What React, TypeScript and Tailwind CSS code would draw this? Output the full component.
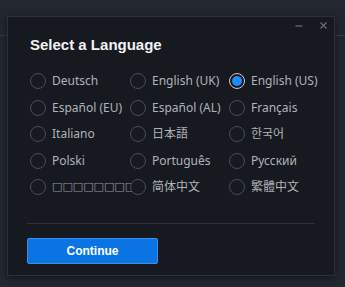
import React, { useState } from "react"

const languages = [
  "Deutsch",
  "English (UK)",
  "English (US)",
  "Español (EU)",
  "Español (AL)",
  "Français",
  "Italiano",
  "日本語",
  "한국어",
  "Polski",
  "Português",
  "Русский",
  "□□□□□□□□",
  "简体中文",
  "繁體中文",
]

const Radio = ({ checked }: { checked: boolean }) =>
  checked ? (
    <span className="relative z-10 flex h-4 w-4 shrink-0 items-center justify-center rounded-full border border-[#c9ccd2] bg-[#16191f]">
      <span className="h-[10px] w-[10px] rounded-full bg-[#1e8cff]" />
    </span>
  ) : (
    <span className="relative z-10 h-4 w-4 shrink-0 rounded-full border border-[#4a4d54] bg-[#161920]" />
  )

const App = () => {
  const [selected, setSelected] = useState("English (US)")
  return (
    <div className="relative h-[287px] w-[345px] overflow-hidden bg-[#23272f] font-['Noto_Sans','Noto_Sans_CJK_JP',sans-serif]">
      <div className="h-[36px] border-b border-[#3a3e46]" />
      <div className="absolute left-[7px] top-[16px] flex h-[260px] w-[328px] flex-col border border-[#2c3038] bg-[#161920] px-[19px] pt-[18px] shadow-[0_2px_8px_rgba(0,0,0,0.5)]">
        <div className="absolute right-[7px] top-[5px] flex gap-[17px] text-[#6d7078]">
          <svg width="8" height="7" viewBox="0 0 8 7" fill="none" stroke="currentColor" strokeWidth="1.2">
            <path d="M0.5 4 L7.5 4" />
          </svg>
          <svg width="7" height="7" viewBox="0 0 7 7" fill="none" stroke="currentColor" strokeWidth="1.1">
            <path d="M0.5 0.5 L6.5 6.5 M6.5 0.5 L0.5 6.5" />
          </svg>
        </div>
        <h1 className="pl-[3px] font-['Liberation_Sans',Arial,sans-serif] text-[15px] font-bold leading-[20px] text-[#f2f2f2]">
          Select a Language
        </h1>
        <div className="mt-[13px] grid grid-cols-[100px_99px_91px] auto-rows-[26.5px]">
          {languages.map(lang => (
            <button
              key={lang}
              onClick={() => setSelected(lang)}
              className="flex min-w-0 items-center gap-[6px] pl-[3px] text-left"
            >
              <Radio checked={selected === lang} />
              <span
                className={
                  lang.startsWith("□")
                    ? "whitespace-nowrap font-['DejaVu_Sans',sans-serif] text-[11px] leading-[18px] text-[#9a9da4]"
                    : "whitespace-nowrap text-[12px] leading-[18px] text-[#b0b3b9]"
                }
              >
                {lang}
              </span>
            </button>
          ))}
        </div>
        <div className="mt-auto" />
        <div className="h-px w-full bg-[#2e3139]" />
        <button className="mb-[11px] mt-[14px] h-[26px] w-[131px] rounded-[2px] border border-[#3d8fe8] bg-[#0a74e2] font-['Liberation_Sans',Arial,sans-serif] text-[12px] font-bold text-white">
          Continue
        </button>
      </div>
    </div>
  )
}

export default App
